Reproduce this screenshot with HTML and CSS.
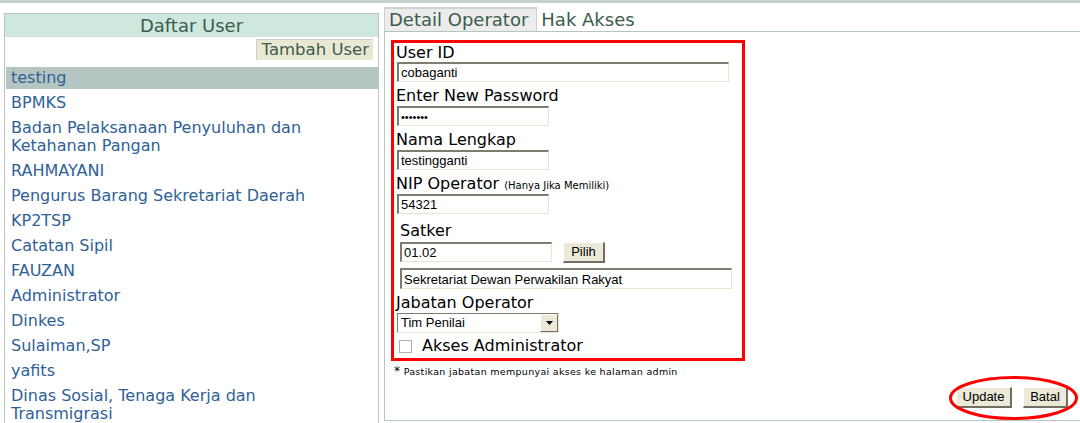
FILE: index.html
```html
<!DOCTYPE html>
<html>
<head>
<meta charset="utf-8">
<link rel="stylesheet" href="styles.css">
</head>
<body>
<div class="topbar"></div>
<div class="main">
  <div class="left">
    <div class="left-head">Daftar User</div>
    <div class="left-tools"><span class="add-btn">Tambah User</span></div>
    <ul class="users">
      <li class="active">testing</li>
      <li>BPMKS</li>
      <li>Badan Pelaksanaan Penyuluhan dan Ketahanan Pangan</li>
      <li>RAHMAYANI</li>
      <li>Pengurus Barang Sekretariat Daerah</li>
      <li>KP2TSP</li>
      <li>Catatan Sipil</li>
      <li>FAUZAN</li>
      <li>Administrator</li>
      <li>Dinkes</li>
      <li>Sulaiman,SP</li>
      <li>yafits</li>
      <li>Dinas Sosial, Tenaga Kerja dan Transmigrasi</li>
    </ul>
  </div>
  <div class="right">
    <div class="tabs">
      <span class="tab tab-on">Detail Operator</span><span class="tab">Hak Akses</span>
    </div>
    <div class="pane">
      <div class="redbox">
        <div class="lbl first">User ID</div>
        <input class="inp w332" type="text" value="cobaganti">
        <div class="lbl">Enter New Password</div>
        <input class="inp w152 pw" type="password" value="aaaaaaa">
        <div class="lbl">Nama Lengkap</div>
        <input class="inp w152" type="text" value="testingganti">
        <div class="lbl">NIP Operator <small>(Hanya Jika Memiliki)</small></div>
        <input class="inp w152" type="text" value="54321">
        <div class="satker">
          <div class="lbl satker-lbl">Satker</div>
          <div class="satker-row">
            <input class="inp w152" type="text" value="01.02">
            <span class="btn pilih">Pilih</span>
          </div>
          <input class="inp w332 sek" type="text" value="Sekretariat Dewan Perwakilan Rakyat">
        </div>
        <div class="lbl jab">Jabatan Operator</div>
        <div class="select">
          <span class="sel-text">Tim Penilai</span>
          <span class="sel-arrow"><svg width="7" height="4" viewBox="0 0 7 4"><path d="M0 0h7L3.5 4z" fill="#000"/></svg></span>
        </div>
        <label class="chk-row"><span class="chk"></span><span>Akses Administrator</span></label>
      </div>
      <div class="note"><span class="star">*</span> Pastikan jabatan mempunyai akses ke halaman admin</div>
      <div class="actions">
        <span class="btn upd">Update</span>
        <span class="btn bat">Batal</span>
        <svg class="ring" width="131" height="46" viewBox="0 0 131 46"><ellipse cx="65.5" cy="23" rx="63" ry="20.5" fill="none" stroke="#ff0000" stroke-width="3"/></svg>
      </div>
    </div>
  </div>
</div>
</body>
</html>
```

FILE: styles.css
```css
html, body {
  margin: 0;
  padding: 0;
  background: #fff;
  overflow: hidden;
}
body {
  font-family: "DejaVu Sans", Verdana, sans-serif;
  width: 1080px;
  height: 423px;
}
.topbar {
  height: 3px;
  background: #c2d0ca;
}
.main {
  display: flex;
  align-items: flex-start;
  padding-left: 4px;
}
.left {
  width: 373px;
  margin-top: 10px;
  border: 1px solid #b5c6bf;
  border-bottom: none;
  height: 420px;
}
.left-head {
  background: #cfe8df;
  color: #3b5c4d;
  font-size: 18px;
  text-align: center;
  height: 23px;
  line-height: 23px;
}
.left-tools {
  display: flex;
  justify-content: flex-end;
  padding: 2px 5px 0 0;
}
.add-btn {
  background: #e9e8d3;
  color: #3b5c4d;
  font-size: 16.5px;
  line-height: 20px;
  padding: 0 4px 0 5px;
  border-top: 1px solid #c9cfc8;
  border-left: 1px solid #c9cfc8;
}
.users {
  list-style: none;
  margin: 7px 0 0;
  padding: 0 0 0 1px;
}
.users li {
  color: #2f6196;
  font-size: 16px;
  line-height: 18px;
  padding: 2px 40px 2px 5px;
  margin-bottom: 3px;
}
.users li.active {
  background: #b5c6c2;
}
.right {
  flex: 1;
  margin-left: 5px;
  margin-top: 4px;
}
.tabs {
  display: flex;
  align-items: flex-end;
  height: 24px;
  border-bottom: 1px solid #b5c6bf;
}
.tab {
  color: #3b5c4d;
  font-size: 18px;
  line-height: 22px;
  padding: 0 3px 0 4px;
}
.tab-on {
  background: #ececec;
  border-top: 2px solid #c9d3cf;
  border-left: 1px solid #c9d3cf;
  border-right: 1px solid #c9d3cf;
  padding-right: 8px;
}
.pane {
  border-left: 1px solid #b5c6bf;
  border-bottom: 1px solid #b5c6bf;
  height: 389px;
  box-sizing: border-box;
  padding: 8px 0 0 6px;
  display: flex;
  flex-direction: column;
  align-items: flex-start;
}
.redbox {
  width: 348px;
  border: 3px solid #ff0000;
  padding: 0 0 1px 0;
  display: flex;
  flex-direction: column;
  align-items: flex-start;
}
.lbl {
  font-size: 16px;
  line-height: 20px;
  color: #000;
  margin-top: 4px;
  padding-left: 2px;
}
.lbl.first {
  margin-top: 0;
  line-height: 19px;
}
.lbl small {
  font-size: 10px;
  line-height: 0;
}
.inp {
  display: block;
  box-sizing: border-box;
  height: 20px;
  margin: 0 0 0 3px;
  padding: 0 2px;
  font-family: "Liberation Sans", Arial, sans-serif;
  font-size: 13px;
  color: #000;
  background: #fff;
  border-style: solid;
  border-width: 2px 1px 1px 2px;
  border-color: #7f7b6f #e9e7d4 #e9e7d4 #7f7b6f;
  outline: none;
}
.pw {
  font-size: 11px;
}
.w332 { width: 332px; }
.w152 { width: 152px; }
.satker {
  padding-left: 3px;
  display: flex;
  flex-direction: column;
  align-items: flex-start;
}
.satker-lbl {
  margin-top: 7px;
  padding-left: 3px;
}
.satker-row {
  display: flex;
  align-items: flex-start;
  margin-top: 1px;
}
.btn {
  display: inline-block;
  box-sizing: border-box;
  background: #ece9d8;
  font-family: "Liberation Sans", Arial, sans-serif;
  font-size: 13px;
  color: #000;
  height: 21px;
  line-height: 18px;
  text-align: center;
  border-style: solid;
  border-width: 1px 2px 2px 1px;
  border-color: #fff #716f64 #716f64 #fff;
}
.pilih {
  width: 42px;
  margin-left: 11px;
}
.sek {
  margin-top: 5px;
  height: 21px;
}
.jab {
  margin-top: 4px;
}
.select {
  display: flex;
  box-sizing: border-box;
  width: 162px;
  height: 20px;
  margin-left: 3px;
  border-style: solid;
  border-width: 1px;
  border-color: #7f7b6f #e9e7d4 #e9e7d4 #7f7b6f;
  font-family: "Liberation Sans", Arial, sans-serif;
  font-size: 13px;
}
.sel-text {
  flex: 1;
  line-height: 18px;
  padding-left: 3px;
}
.sel-arrow {
  width: 18px;
  height: 18px;
  box-sizing: border-box;
  background: #ece9d8;
  border-style: solid;
  border-width: 1px;
  border-color: #fff #716f64 #716f64 #fff;
  display: flex;
  align-items: center;
  justify-content: center;
}
.chk-row {
  display: flex;
  align-items: center;
  font-size: 16px;
  line-height: 22px;
  margin-top: 2px;
  margin-left: 5px;
}
.chk {
  width: 11px;
  height: 11px;
  border: 1px solid #b1b0a6;
  margin-right: 10px;
  background: #fff;
}
.note {
  font-size: 9.5px;
  margin-top: 3px;
  margin-left: 3px;
  letter-spacing: 0.3px;
}
.star {
  font-size: 12px;
}
.actions {
  align-self: flex-end;
  position: relative;
  display: flex;
  margin-top: 9px;
  margin-right: 12px;
}
.upd {
  width: 56px;
}
.bat {
  width: 45px;
  margin-left: 11px;
}
.ring {
  position: absolute;
  left: -8px;
  top: -12px;
  pointer-events: none;
}
```
